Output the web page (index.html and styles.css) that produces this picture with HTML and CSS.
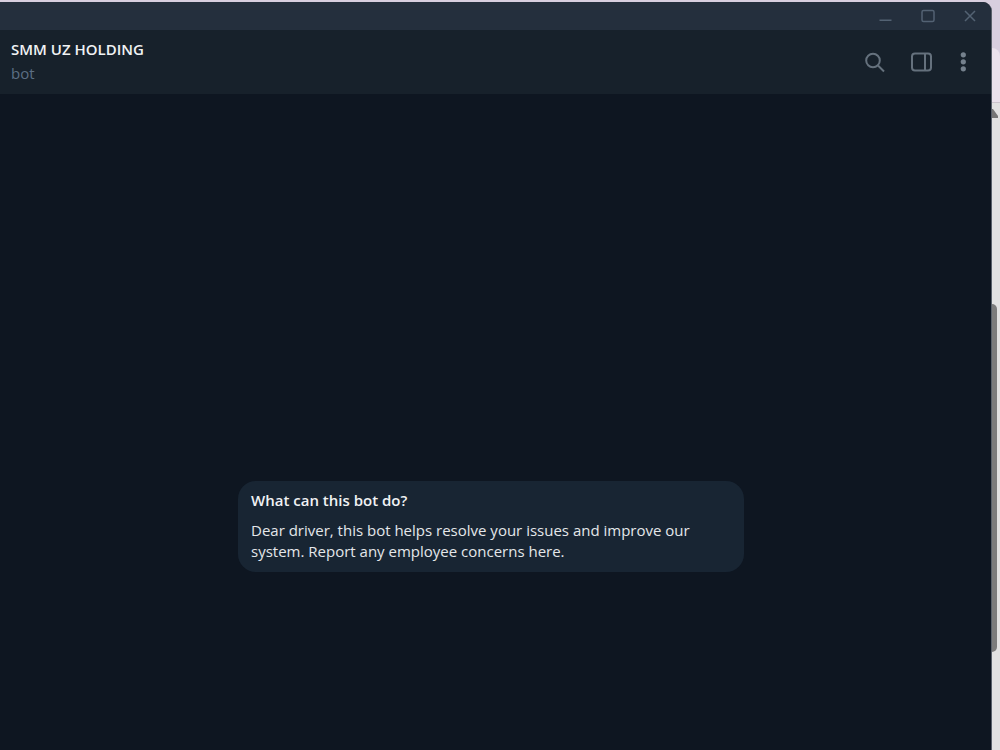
FILE: index.html
```
<!DOCTYPE html>
<html lang="en">
<head>
<meta charset="UTF-8">
<meta name="viewport" content="width=device-width,initial-scale=1.0">
<title>SMM UZ HOLDING</title>
<link rel="stylesheet" href="styles.css">
</head>
<body>
  <div class="window">
    <div class="titlebar">
      <button class="win-btn" aria-label="Minimize">
        <svg width="16" height="16" viewBox="0 0 16 16"><path d="M1.5 12.2h12"/></svg>
      </button>
      <button class="win-btn" aria-label="Maximize">
        <svg width="16" height="16" viewBox="0 0 16 16"><rect x="2" y="2.5" width="12" height="11" rx="1.5"/></svg>
      </button>
      <button class="win-btn" aria-label="Close">
        <svg width="16" height="16" viewBox="0 0 16 16"><path d="M3 3l10 10M13 3L3 13"/></svg>
      </button>
    </div>

    <header class="header">
      <div class="peer">
        <h1 class="name">SMM UZ HOLDING</h1>
        <div class="status">bot</div>
      </div>
      <div class="tools">
        <button class="tool" aria-label="Search">
          <svg width="24" height="24" viewBox="0 0 24 24"><circle cx="10" cy="10.5" r="6.8"/><path d="M15 15.5l6 6"/></svg>
        </button>
        <button class="tool" aria-label="Side panel">
          <svg width="24" height="24" viewBox="0 0 24 24"><rect x="3" y="3.5" width="19" height="17" rx="3"/><path d="M16 3.5v17"/></svg>
        </button>
        <button class="tool more" aria-label="Menu">
          <svg width="24" height="24" viewBox="0 0 24 24"><circle cx="12.3" cy="4.8" r="2.6"/><circle cx="12.3" cy="11.8" r="2.6"/><circle cx="12.3" cy="18.8" r="2.6"/></svg>
        </button>
      </div>
    </header>

    <main class="chat">
      <section class="about">
        <h2 class="about-title">What can this bot do?</h2>
        <p class="about-text">Dear driver, this bot helps resolve your issues and improve our system. Report any employee concerns here.</p>
      </section>
    </main>
  </div>

  <!-- edge of the browser behind the chat window -->
  <div class="behind">
    <div class="behind-tabs"></div>
    <div class="behind-bar"></div>
    <div class="track">
      <svg class="arrow" width="8" height="10" viewBox="0 0 8 10"><path d="M0 0h1l5 7v2H0z"/></svg>
      <div class="thumb"></div>
    </div>
  </div>
</body>
</html>
```
FILE: styles.css
```
* { box-sizing: border-box; }
body { margin: 0; height: 100vh; display: flex; overflow: hidden; background: #d8cfdf; font: 15px/21px "Open Sans", "Noto Sans", sans-serif; }
h1, h2, p { margin: 0; font-size: 15px; }
button { display: grid; place-items: center; padding: 0; border: 0; background: none; cursor: pointer; }
svg { display: block; fill: none; }

.window { flex: 1; min-width: 0; margin-top: 2px; display: flex; flex-direction: column; overflow: hidden; border-right: 1px solid #59616b; border-top-right-radius: 9px; background: #0e1621; }

.titlebar { display: flex; justify-content: flex-end; height: 28px; background: #242f3d; }
.win-btn { width: 42px; stroke: #536273; stroke-width: 1.5; }

.header { display: flex; align-items: center; justify-content: space-between; height: 64px; padding: 0 16px 0 11px; background: #17212b; }
.peer { padding-bottom: 2px; }
.name { line-height: 24px; font-weight: 600; color: #f0f2f4; }
.status { line-height: 24px; color: #5c6f84; }
.tools { display: flex; gap: 22px; }
.tool { width: 24px; height: 24px; stroke: #65717d; stroke-width: 2; }
.more { margin-left: -4px; stroke: none; }
.more svg { fill: #75818d; }

.chat { flex: 1; display: flex; flex-direction: column; justify-content: flex-end; align-items: center; padding: 0 9px 178px 0; }
.about { width: 506px; max-width: 100%; padding: 9px 13px 10px; border-radius: 18px; background: #182533; }
.about-title { margin-bottom: 9px; font-weight: 600; color: #f0f2f4; }
.about-text { color: #e4e7ea; }

.behind { width: 8px; display: flex; flex-direction: column; }
.behind-tabs { height: 48px; }
.behind-bar { height: 55px; border-bottom: 1px solid #ccc5cd; border-top-right-radius: 8px; background: #ebe2ec; }
.track { flex: 1; background: #e2e2e2; }
.arrow { margin-top: 6px; fill: #777; }
.thumb { width: 5px; height: 348px; margin-top: 185px; border-radius: 0 5px 5px 0; background: #7c7c7c; }
```
